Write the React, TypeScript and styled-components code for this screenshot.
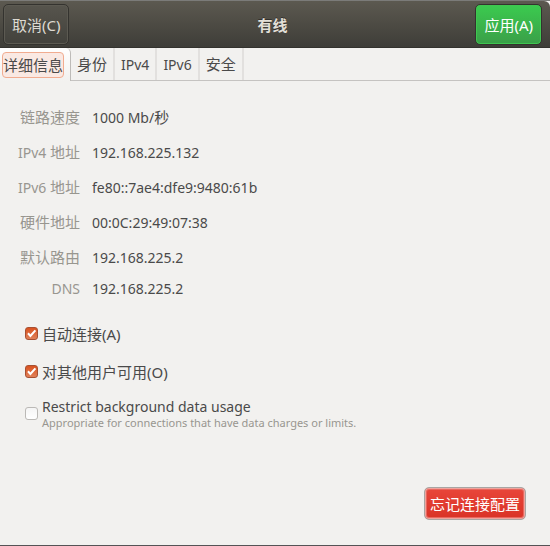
import React, { useState } from "react";
import styled, { createGlobalStyle } from "styled-components";

const GlobalStyle = createGlobalStyle`
  *, *::before, *::after { box-sizing: border-box; }
  body {
    margin: 0;
    background: #f2f1ef;
    color: #4a4a4a;
    font-family: "Noto Sans", "Noto Sans CJK SC", sans-serif;
    font-size: 15px;
    line-height: 22px;
  }
  button, input { font: inherit; color: inherit; }
`;

const Dialog = styled.main`
  display: flex;
  flex-direction: column;
  min-height: 100vh;
  border-top: 1px solid #7b7b79;
  border-bottom: 1px solid #555355;
`;

const HeaderBar = styled.header`
  display: grid;
  grid-template-columns: 1fr auto 1fr;
  align-items: center;
  padding: 3px 8px 4px 3px;
  height: 47px;
  background: linear-gradient(#5c5950, #3e3d38);
  border-bottom: 1px solid #33322e;
  border-top-right-radius: 6px;
`;

const Title = styled.h1`
  margin: 0;
  color: #e2dfd7;
  font-size: 15px;
  font-weight: 700;
  text-shadow: 0 -1px #33322e;
`;

const HeaderButton = styled.button<{ $suggested?: boolean }>`
  height: 41px;
  padding: 0 8px;
  justify-self: ${(p) => (p.$suggested ? "end" : "start")};
  border: 1px solid #34332f;
  border-radius: 5px;
  white-space: nowrap;
  color: ${(p) => (p.$suggested ? "#ffffff" : "#dedbd2")};
  background: ${(p) =>
    p.$suggested
      ? "linear-gradient(#3bcb4f, #3a9f48)"
      : "linear-gradient(#57554d, #42413c)"};
  box-shadow: inset 0 0 0 1px ${(p) => (p.$suggested ? "#3fc650" : "#5c5a52")};
`;

const Latin = styled.span`
  font-size: 14px;
`;

const TabBar = styled.div`
  display: flex;
  height: 33px;
  border-bottom: 1px solid #c5c3c1;
`;

const Tab = styled.button<{ $active: boolean }>`
  display: flex;
  align-items: center;
  height: ${(p) => (p.$active ? "33px" : "32px")};
  padding: ${(p) => (p.$active ? "0 6px 0 2px" : "0 5px")};
  border: 0;
  border-right: ${(p) => (p.$active ? "1px solid #bdbbb8" : "2px solid #e2e0de")};
  border-top-right-radius: ${(p) => (p.$active ? "5px" : "0")};
  background: ${(p) => (p.$active ? "linear-gradient(#ffffff, #f2f1ef)" : "#f2f1ef")};
  white-space: nowrap;
`;

const TabLabel = styled.span<{ $active: boolean }>`
  display: block;
  padding: 1px 0;
  border: 1px solid ${(p) => (p.$active ? "#f1ac90" : "transparent")};
  border-radius: 4px;
  background: ${(p) => (p.$active ? "#fae9e3" : "transparent")};
`;

const Content = styled.section`
  display: flex;
  flex: 1;
  flex-direction: column;
  padding: 19px 24px 25px 17px;
`;

const Details = styled.dl`
  display: grid;
  grid-template-columns: 63px 1fr;
  column-gap: 12px;
  margin: 0;
`;

const Term = styled.dt<{ $compact?: boolean }>`
  text-align: right;
  white-space: nowrap;
  color: #98968f;
  line-height: ${(p) => (p.$compact ? "26px" : "35px")};
`;

const Value = styled.dd<{ $compact?: boolean }>`
  margin: 0;
  line-height: ${(p) => (p.$compact ? "26px" : "35px")};
`;

const Options = styled.div`
  display: flex;
  flex-direction: column;
  gap: 14px;
  margin-top: 20px;
  padding-left: 7px;
`;

const Option = styled.label`
  display: flex;
  align-items: center;
  gap: 4px;
  line-height: 24px;
`;

const CheckHolder = styled.span`
  display: grid;
  flex: none;
  width: 14px;
  height: 14px;

  > * { grid-area: 1 / 1; }
`;

const CheckInput = styled.input`
  appearance: none;
  justify-self: end;
  width: 13px;
  height: 13px;
  margin: 0;
  border: 1px solid #bbb9b6;
  border-radius: 3px;
  background: linear-gradient(#f5f5f5, #ffffff);

  &:checked {
    border-color: #a75032;
    background: linear-gradient(#d9521f, #e08058);
  }
`;

const CheckMark = styled.svg`
  justify-self: end;
  width: 13px;
  height: 13px;
  pointer-events: none;
`;

const OptionText = styled.span`
  display: flex;
  flex-direction: column;
`;

const OptionName = styled.span`
  font-size: 14px;
  line-height: 18px;
`;

const Hint = styled.span`
  color: #98968f;
  font-size: 11px;
  line-height: 13px;
`;

const ForgetButton = styled.button`
  align-self: flex-end;
  height: 33px;
  margin-top: auto;
  padding: 0 5px;
  border: 1px solid #a9a5a3;
  border-radius: 5px;
  color: #ffffff;
  background: linear-gradient(#e9463a, #d93226);
  box-shadow: inset 0 0 0 1px #f0a49d, inset 0 0 0 2px #e8685f;
  white-space: nowrap;
`;

const tabs: React.ReactNode[] = [
  "详细信息",
  "身份",
  <Latin>IPv4</Latin>,
  <Latin>IPv6</Latin>,
  "安全",
];

const details: { id: string; term: React.ReactNode; value: React.ReactNode; compact?: boolean }[] = [
  { id: "speed", term: "链路速度", value: <><Latin>1000 Mb/</Latin>秒</> },
  { id: "ipv4", term: <><Latin>IPv4 </Latin>地址</>, value: <Latin>192.168.225.132</Latin> },
  { id: "ipv6", term: <><Latin>IPv6 </Latin>地址</>, value: <Latin>fe80::7ae4:dfe9:9480:61b</Latin> },
  { id: "mac", term: "硬件地址", value: <Latin>00:0C:29:49:07:38</Latin> },
  { id: "route", term: "默认路由", value: <Latin>192.168.225.2</Latin> },
  { id: "dns", term: <Latin>DNS</Latin>, value: <Latin>192.168.225.2</Latin>, compact: true },
];

function CheckOption({ initial = false, children }: { initial?: boolean; children: React.ReactNode }) {
  const [checked, setChecked] = useState(initial);
  return (
    <Option>
      <CheckHolder>
        <CheckInput type="checkbox" checked={checked} onChange={(e) => setChecked(e.target.checked)} />
        {checked && (
          <CheckMark viewBox="0 0 14 14" aria-hidden="true">
            <path d="M3.2 6.8 5.8 9.6 11.2 3.6" fill="none" stroke="#fff" strokeWidth="2.2" />
          </CheckMark>
        )}
      </CheckHolder>
      <OptionText>{children}</OptionText>
    </Option>
  );
}

export default function App() {
  const [active, setActive] = useState(0);
  return (
    <>
      <GlobalStyle />
      <Dialog>
        <HeaderBar>
          <HeaderButton type="button">取消(C)</HeaderButton>
          <Title>有线</Title>
          <HeaderButton type="button" $suggested>应用(A)</HeaderButton>
        </HeaderBar>
        <TabBar role="tablist">
          {tabs.map((label, i) => (
            <Tab
              key={i}
              type="button"
              role="tab"
              aria-selected={i === active}
              $active={i === active}
              onClick={() => setActive(i)}
            >
              <TabLabel $active={i === active}>{label}</TabLabel>
            </Tab>
          ))}
        </TabBar>
        <Content>
          <Details>
            {details.map(({ id, term, value, compact }) => (
              <React.Fragment key={id}>
                <Term $compact={compact}>{term}</Term>
                <Value $compact={compact}>{value}</Value>
              </React.Fragment>
            ))}
          </Details>
          <Options>
            <CheckOption initial>自动连接(A)</CheckOption>
            <CheckOption initial>对其他用户可用(O)</CheckOption>
            <CheckOption>
              <OptionName>Restrict background data usage</OptionName>
              <Hint>Appropriate for connections that have data charges or limits.</Hint>
            </CheckOption>
          </Options>
          <ForgetButton type="button">忘记连接配置</ForgetButton>
        </Content>
      </Dialog>
    </>
  );
}
